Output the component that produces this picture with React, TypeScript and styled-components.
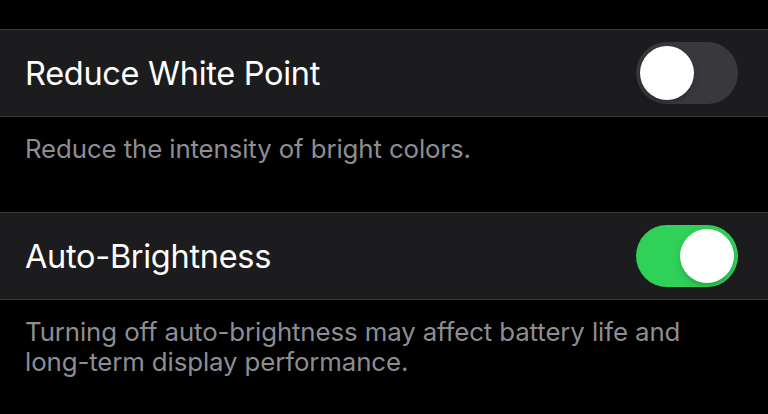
import React from "react";
import styled, { createGlobalStyle } from "styled-components";

const GlobalStyle = createGlobalStyle`
  html, body {
    margin: 0;
    padding: 0;
    background: #000;
  }
  body {
    font-family: Inter, "Noto Sans", sans-serif;
    -webkit-font-smoothing: antialiased;
  }
`;

const Page = styled.div`
  width: 768px;
  height: 414px;
  overflow: hidden;
  background: #000;
  padding-top: 29px;
  box-sizing: border-box;
`;

const Group = styled.div`
  display: flex;
  align-items: center;
  justify-content: space-between;
  height: 86px;
  padding: 0 30px 0 25px;
  background: #1c1c1e;
  border-top: 1px solid #38383a;
  border-bottom: 1px solid #38383a;
`;

const Label = styled.span`
  color: #fff;
  font-size: 32.5px;
  letter-spacing: -0.3px;
`;

const Footer = styled.p`
  margin: 0;
  padding: 17px 25px 0 25px;
  height: 95px;
  box-sizing: border-box;
  color: #8d8d93;
  font-size: 25.8px;
  line-height: 30px;
  letter-spacing: -0.1px;
`;

const Track = styled.button<{ $on: boolean }>`
  position: relative;
  width: 102px;
  height: 62px;
  border: none;
  padding: 0;
  border-radius: 31px;
  background: ${(p) => (p.$on ? "#30d158" : "#39393d")};
  cursor: pointer;
`;

const Knob = styled.span<{ $on: boolean }>`
  position: absolute;
  top: 4px;
  left: ${(p) => (p.$on ? "44px" : "4px")};
  width: 54px;
  height: 54px;
  border-radius: 50%;
  background: #fff;
  box-shadow: 0 3px 8px rgba(0, 0, 0, 0.15), 0 3px 1px rgba(0, 0, 0, 0.06);
  transition: left 0.2s;
`;

function Toggle({ on, onChange }: { on: boolean; onChange: () => void }) {
  return (
    <Track $on={on} onClick={onChange} aria-pressed={on}>
      <Knob $on={on} />
    </Track>
  );
}

export default function App() {
  const [whitePoint, setWhitePoint] = React.useState(false);
  const [autoBright, setAutoBright] = React.useState(true);

  return (
    <Page>
      <GlobalStyle />
      <Group>
        <Label>Reduce White Point</Label>
        <Toggle on={whitePoint} onChange={() => setWhitePoint((v) => !v)} />
      </Group>
      <Footer>Reduce the intensity of bright colors.</Footer>
      <Group>
        <Label>Auto-Brightness</Label>
        <Toggle on={autoBright} onChange={() => setAutoBright((v) => !v)} />
      </Group>
      <Footer>
        Turning off auto-brightness may affect battery life and
        <br />
        long-term display performance.
      </Footer>
    </Page>
  );
}
